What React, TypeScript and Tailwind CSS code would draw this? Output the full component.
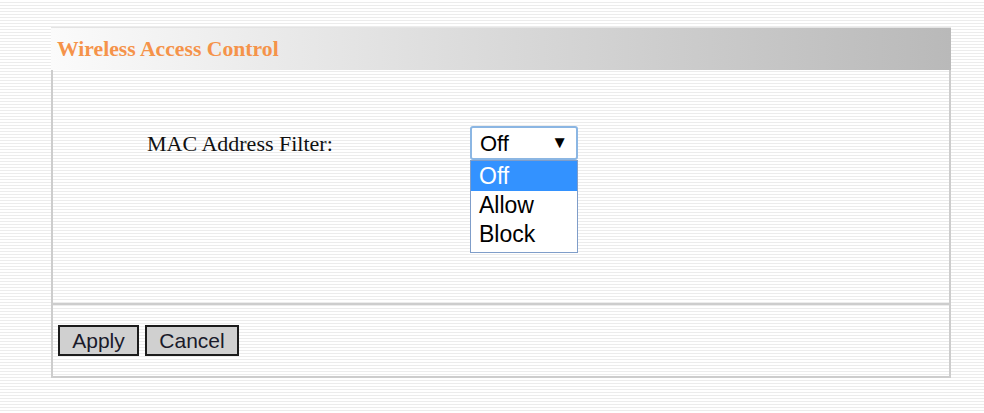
import React from 'react';

const App: React.FC = () => {
  const options = ['Off', 'Allow', 'Block'];

  return (
    <div className="w-[984px] h-[413px] pt-[27px] pl-[51px] bg-[repeating-linear-gradient(to_bottom,#ffffff_0px,#ffffff_2px,#ececec_2px,#ececec_3px)]">
      <div className="w-[900px]">
        <div className="h-[43px] flex items-center pl-[6px] border-t border-[#e4e4e4] bg-gradient-to-r from-[#fbfbfb] via-[#d9d9d9] to-[#b9b9b9]">
          <span className="font-['Liberation_Serif',serif] font-bold text-[21.7px] text-[#f5934a]">
            Wireless Access Control
          </span>
        </div>
        <div className="border-l-2 border-r-2 border-b-2 border-[#cdcdcd]">
          <div className="h-[233px] flex items-start pt-[56px] pl-[94px]">
            <div className="w-[323px] h-[34px] flex items-center font-['Liberation_Serif',serif] text-[22px] text-[#111]">
              MAC Address Filter:
            </div>
            <div className="relative w-[108px]">
              <div className="h-[34px] flex items-center justify-between pl-[8px] pr-[8px] border-2 border-[#8bb6e3] rounded-[3px] bg-white font-['Liberation_Sans',sans-serif] text-[22px] text-black">
                <span>Off</span>
                <span className="text-[17px]">▼</span>
              </div>
              <div className="absolute left-0 top-[34px] w-[108px] border border-[#7f9dc9] bg-white pb-[3px] font-['Liberation_Sans',sans-serif] text-[23px] text-black">
                {options.map((opt, i) => (
                  <div
                    key={opt}
                    className={
                      i === 0
                        ? 'h-[30px] leading-[30px] px-[8px] bg-[#3392ff] text-white'
                        : 'h-[29px] leading-[29px] px-[8px]'
                    }
                  >
                    {opt}
                  </div>
                ))}
              </div>
            </div>
          </div>
          <div className="border-t-2 border-[#cdcdcd] h-[73px] pt-[20px] pl-[5px] flex items-start gap-[6px]">
            <button className="w-[81px] h-[31px] border-2 border-[#1c1c1c] bg-[#d0d0d0] font-['Liberation_Sans',sans-serif] text-[21px] text-[#1a1a2a] leading-none">
              Apply
            </button>
            <button className="w-[94px] h-[31px] border-2 border-[#1c1c1c] bg-[#d0d0d0] font-['Liberation_Sans',sans-serif] text-[21px] text-[#1a1a2a] leading-none">
              Cancel
            </button>
          </div>
        </div>
      </div>
    </div>
  );
};

export default App;
